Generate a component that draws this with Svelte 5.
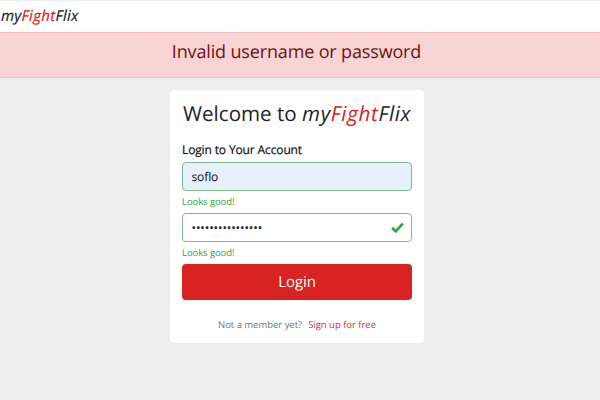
<script>
  let username = $state('soflo');
  const mask = '•'.repeat(16);
</script>

{#snippet brand()}<em>my<b>Fight</b>Flix</em>{/snippet}

<div class="page">
  <header>{@render brand()}</header>
  <div class="alert" role="alert">Invalid username or password</div>
  <main>
    <h1>Welcome to {@render brand()}</h1>
    <form>
      <label for="user">Login to Your Account</label>
      <input id="user" class="field filled" bind:value={username} />
      <div class="feedback">Looks good!</div>
      <div class="field password">
        <span>{mask}</span>
        <svg width="13" height="12" viewBox="0 0 13 12">
          <path fill="none" stroke="#28a745" stroke-width="2.7" d="M1.2 5.8L4.7 9.4L11.8 1.6" />
        </svg>
      </div>
      <div class="feedback">Looks good!</div>
      <button type="button">Login</button>
    </form>
    <p><span>Not a member yet?</span><a href="#signup">Sign up for free</a></p>
  </main>
</div>

<style>
  :global(body) { margin: 0; background: #ededed; }
  .page {
    height: 400px;
    overflow: hidden;
    font-family: "Open Sans", "Noto Sans", sans-serif;
    text-rendering: geometricPrecision;
    color: #212529;
    display: flex;
    flex-direction: column;
    align-items: center;
  }
  .page * { box-sizing: border-box; }
  b { font-weight: inherit; color: #dc1a20; }
  header {
    width: 100%;
    height: 32px;
    background: #fff;
    border-top: 1px solid #f0f0f0;
    padding-left: 1px;
    font-size: 15px;
    line-height: 30px;
    letter-spacing: 0.3px;
    font-weight: 500;
    -webkit-text-stroke: 0.2px;
  }
  .alert {
    width: 100%;
    height: 46px;
    background: #f7d3d3;
    border: solid #f3c3c4;
    border-width: 1px 0;
    color: #6f1014;
    font-size: 18px;
    letter-spacing: -0.15px;
    line-height: 38px;
    text-align: center;
    padding-right: 7px;
  }
  main {
    width: 254px;
    height: 253px;
    margin: 12px 6px 0 0;
    background: #fff;
    border-radius: 4px;
    padding: 0 12px;
  }
  h1 {
    margin: 0;
    height: 48px;
    padding-left: 1px;
    font-size: 20.6px;
    line-height: 48px;
    font-weight: 400;
    white-space: nowrap;
  }
  h1 em { letter-spacing: 0.64px; }
  form { display: flex; flex-direction: column; }
  label {
    height: 24px;
    font-size: 12px;
    line-height: 24px;
    letter-spacing: -0.13px;
    font-weight: 500;
    color: #111;
    -webkit-text-stroke: 0.2px;
  }
  .field {
    width: 230px;
    height: 29px;
    border: 1px solid #7abf88;
    border-radius: 4px;
    padding: 0 8.5px;
    font: 12px "Open Sans", sans-serif;
    letter-spacing: -0.1px;
    text-rendering: geometricPrecision;
    color: #212529;
    outline: 0;
    margin: 0;
  }
  .filled { background: #e8effc; color: #111; }
  .password {
    display: flex;
    align-items: center;
    justify-content: space-between;
    padding-right: 7px;
  }
  .feedback {
    height: 22px;
    font-size: 9.5px;
    line-height: 21px;
    letter-spacing: -0.08px;
    color: #28a745;
  }
  button {
    width: 230px;
    height: 36px;
    border: 0;
    border-radius: 4px;
    padding: 0;
    background: #d92323;
    color: #fff;
    font: 15px "Open Sans", sans-serif;
    letter-spacing: -0.1px;
    text-rendering: geometricPrecision;
  }
  p {
    margin: 16px 0 0;
    display: flex;
    justify-content: center;
    gap: 6px;
    font-size: 9.5px;
    line-height: 18px;
    letter-spacing: -0.02px;
    color: #6c757d;
  }
  a { color: #dc2b2b; text-decoration: none; }
</style>
